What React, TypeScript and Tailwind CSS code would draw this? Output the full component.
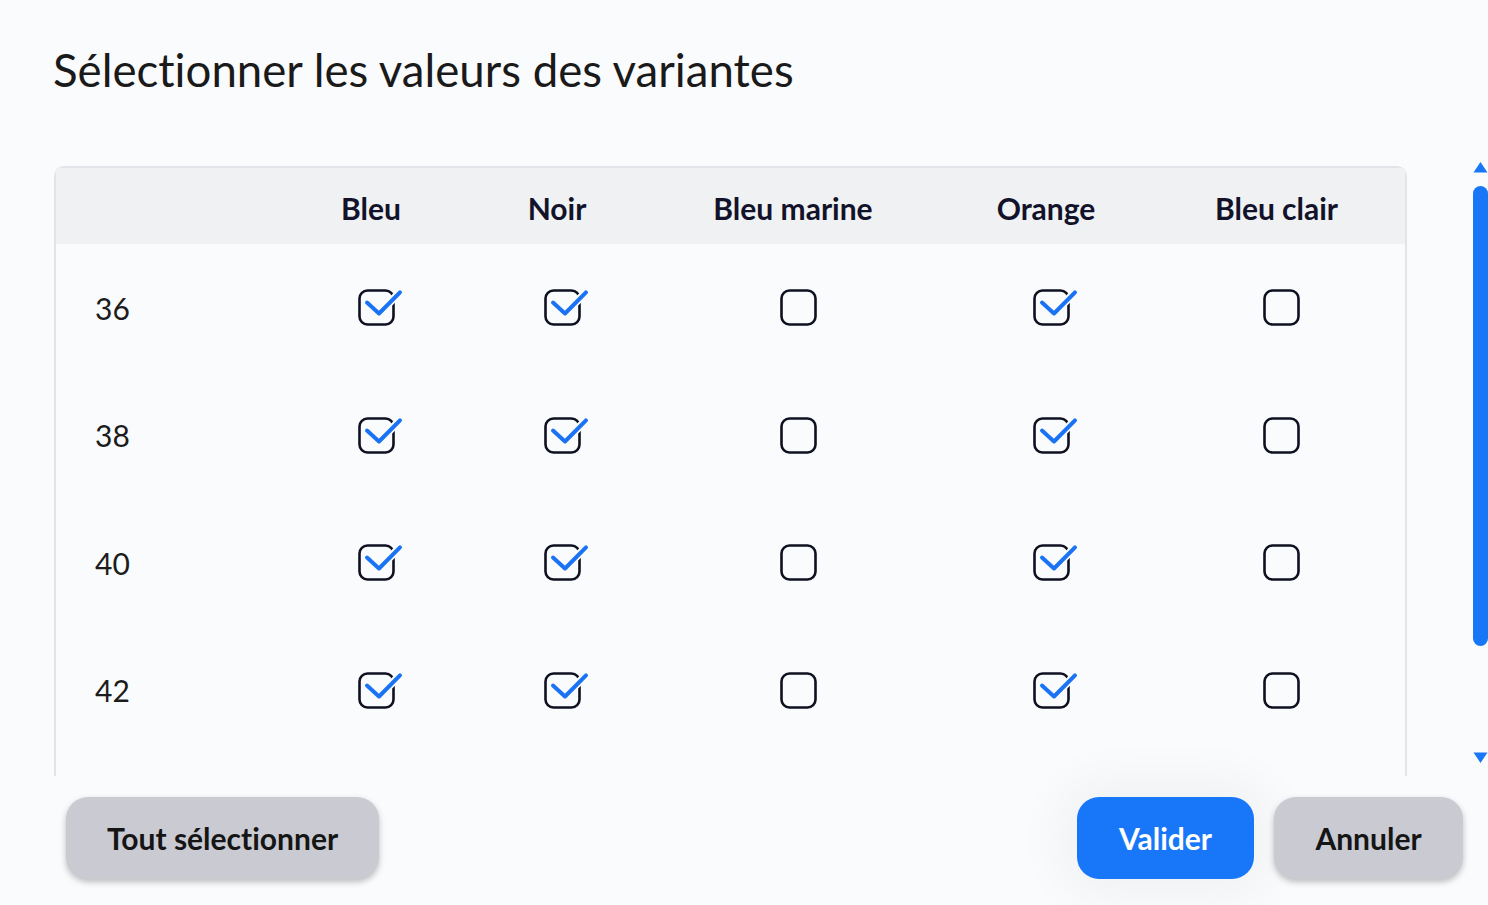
import React from 'react';

const colonnes = ['Bleu', 'Noir', 'Bleu marine', 'Orange', 'Bleu clair'];

const lignes = [
  { taille: '36', valeurs: [true, true, false, true, false] },
  { taille: '38', valeurs: [true, true, false, true, false] },
  { taille: '40', valeurs: [true, true, false, true, false] },
  { taille: '42', valeurs: [true, true, false, true, false] },
  { taille: '44', valeurs: [true, true, false, true, false] },
];

const Case = ({ coche }: { coche: boolean }) => (
  <svg width="37" height="37" viewBox="0 0 37 37" className="ml-[10px] overflow-visible">
    <rect x="1.5" y="1.5" width="34" height="34" rx="8" fill="none" stroke="#0f1020" strokeWidth="2.6" />
    {coche && (
      <>
        <path d="M28 17 L42 3.3" stroke="#fafbfd" strokeWidth="8" strokeLinecap="round" fill="none" />
        <path d="M9 13.5 L21 24.5 L42 3.3" stroke="#1a73f5" strokeWidth="4" strokeLinecap="round" strokeLinejoin="round" fill="none" />
      </>
    )}
  </svg>
);

export default function App() {
  return (
    <div className="min-h-screen w-full overflow-hidden bg-[#fafbfd] font-[Lato,sans-serif] [font-variant-ligatures:none] [font-feature-settings:'liga'_0,'clig'_0,'dlig'_0]">
      <h1 className="pl-[53px] pt-[48px] text-[45.6px] leading-[44px] text-[#1a1a1a]">
        Sélectionner les valeurs des variantes
      </h1>

      <div className="mt-[66px] flex items-start">
        {/* tableau */}
        <div className="ml-[54px] mt-[8px] h-[610px] w-[1353px] overflow-hidden">
          <div className="rounded-t-[10px] border-2 border-[#e1e5ea]">
            <div className="grid h-[76px] grid-cols-[222px_186px_186px_286px_220px_1fr] items-center bg-[#eff1f3] pt-1 text-[30px] font-bold leading-none text-[#12132a]">
              <div />
              {colonnes.map((c, i) => (
                <div key={c} className={i === 4 ? 'pr-[8px] text-center' : 'text-center'}>
                  {c}
                </div>
              ))}
            </div>
            {lignes.map((l) => (
              <div
                key={l.taille}
                className="grid h-[127.5px] grid-cols-[222px_186px_186px_286px_220px_1fr] items-center"
              >
                <div className="pl-[39px] text-[30px] leading-none text-[#1c1c1c]">{l.taille}</div>
                {l.valeurs.map((v, i) => (
                  <div key={i} className={i === 4 ? 'flex justify-center pr-[8px]' : 'flex justify-center'}>
                    <Case coche={v} />
                  </div>
                ))}
              </div>
            ))}
          </div>
        </div>

        <div className="flex-1" />

        {/* barre de défilement */}
        <div className="flex h-[609px] w-[15px] flex-col items-center">
          <svg width="15" height="12" viewBox="0 0 15 12" className="mt-[3px]">
            <path d="M7.5 1 L14.5 11.5 L0.5 11.5 Z" fill="#1877f7" />
          </svg>
          <div className="mt-[13px] h-[460px] w-[15px] rounded-full bg-[#1877f7]" />
          <div className="flex-1" />
          <svg width="15" height="12" viewBox="0 0 15 12" className="mb-[3px]">
            <path d="M0.5 0.5 L14.5 0.5 L7.5 11 Z" fill="#1877f7" />
          </svg>
        </div>
      </div>

      {/* pied */}
      <div className="mt-[21px] flex items-center justify-between pl-[66px] pr-[25px]">
        <button className="h-[82px] w-[313px] rounded-[22px] bg-[#c9cad2] text-[30px] font-bold leading-none text-[#151515] shadow-[0_3px_6px_rgba(0,0,0,0.25)]">
          Tout sélectionner
        </button>
        <div className="flex gap-[20px]">
          <button className="h-[82px] w-[177px] rounded-[22px] bg-[#1877f9] text-[30px] font-bold leading-none text-white shadow-[0_0_50px_18px_rgba(0,0,0,0.04)]">
            Valider
          </button>
          <button className="h-[82px] w-[189px] rounded-[22px] bg-[#c9cad2] text-[30px] font-bold leading-none text-[#151515] shadow-[0_3px_6px_rgba(0,0,0,0.25)]">
            Annuler
          </button>
        </div>
      </div>
    </div>
  );
}
